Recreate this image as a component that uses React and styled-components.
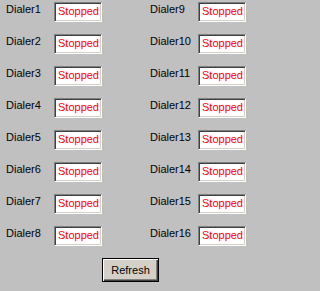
import styled, { createGlobalStyle } from "styled-components";

const GlobalStyle = createGlobalStyle`
  html, body {
    margin: 0;
    padding: 0;
    height: 100%;
    background: #c0c0c0;
  }
  body {
    font-family: "Liberation Sans", Arial, sans-serif;
    font-size: 11px;
    color: #000;
  }
`;

const Form = styled.div`
  width: 252px;
  height: 291px;
  box-sizing: border-box;
  padding: 2px 0 0 6px;
  display: flex;
  flex-direction: column;
`;

const Grid = styled.div`
  display: grid;
  grid-template-columns: 96px 96px;
  grid-auto-flow: column;
  grid-template-rows: repeat(8, 20px);
  column-gap: 48px;
  row-gap: 12px;
`;

const Row = styled.div`
  display: flex;
  align-items: flex-start;
  height: 20px;
`;

const Label = styled.span`
  width: 48px;
  flex-shrink: 0;
  line-height: 13px;
  margin-top: 1px;
  font-size: 11px;
`;

const StatusBox = styled.div`
  width: 48px;
  height: 20px;
  box-sizing: border-box;
  background: #fff;
  border-style: solid;
  border-width: 1px;
  border-color: #808080 #fff #fff #808080;
  box-shadow: inset 1px 1px 0 #404040, inset -1px -1px 0 #d4d0c8;
  padding: 2px 0 0 3px;
  color: #ff0000;
  font-size: 11px;
  line-height: 13px;
  white-space: nowrap;
  overflow: hidden;
`;

const ButtonRow = styled.div`
  padding: 12px 0 0 96px;
`;

const Button = styled.button`
  width: 57px;
  height: 24px;
  box-sizing: border-box;
  margin: 0;
  padding: 0;
  background: #d4d0c8;
  border: 1px solid #000;
  box-shadow: inset 1px 1px 0 #fff, inset -1px -1px 0 #404040,
    inset -2px -2px 0 #808080;
  font-family: "Liberation Sans", Arial, sans-serif;
  font-size: 11px;
  line-height: 13px;
  color: #000;
  cursor: pointer;
`;

const dialers = Array.from({ length: 16 }, (_, i) => `Dialer${i + 1}`);

export default function App() {
  return (
    <>
      <GlobalStyle />
      <Form>
        <Grid>
          {dialers.map((name) => (
            <Row key={name}>
              <Label>{name}</Label>
              <StatusBox>Stopped</StatusBox>
            </Row>
          ))}
        </Grid>
        <ButtonRow>
          <Button>Refresh</Button>
        </ButtonRow>
      </Form>
    </>
  );
}
